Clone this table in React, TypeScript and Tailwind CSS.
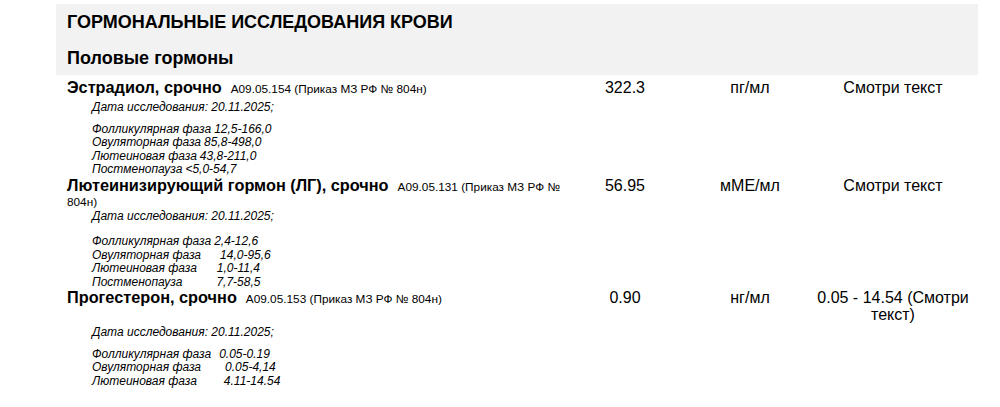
type Range = { label: string; value: string; gap: number };

type Test = {
  name: string;
  code: string;
  value: string;
  unit: string;
  refText: string;
  ranges: Range[];
};

const tests: Test[] = [
  {
    name: "Эстрадиол, срочно",
    code: "A09.05.154 (Приказ МЗ РФ № 804н)",
    value: "322.3",
    unit: "пг/мл",
    refText: "Смотри текст",
    ranges: [
      { label: "Фолликулярная фаза", value: "12,5-166,0", gap: 3 },
      { label: "Овуляторная фаза", value: "85,8-498,0", gap: 3 },
      { label: "Лютеиновая фаза", value: "43,8-211,0", gap: 3 },
      { label: "Постменопауза", value: "<5,0-54,7", gap: 3 },
    ],
  },
  {
    name: "Лютеинизирующий гормон (ЛГ), срочно",
    code: "A09.05.131 (Приказ МЗ РФ № 804н)",
    value: "56.95",
    unit: "мМЕ/мл",
    refText: "Смотри текст",
    ranges: [
      { label: "Фолликулярная фаза", value: "2,4-12,6", gap: 3 },
      { label: "Овуляторная фаза", value: "14,0-95,6", gap: 19 },
      { label: "Лютеиновая фаза", value: "1,0-11,4", gap: 20 },
      { label: "Постменопауза", value: "7,7-58,5", gap: 34 },
    ],
  },
  {
    name: "Прогестерон, срочно",
    code: "A09.05.153 (Приказ МЗ РФ № 804н)",
    value: "0.90",
    unit: "нг/мл",
    refText: "0.05 - 14.54 (Смотри текст)",
    ranges: [
      { label: "Фолликулярная фаза", value: "0.05-0.19", gap: 8 },
      { label: "Овуляторная фаза", value: "0.05-4,14", gap: 24 },
      { label: "Лютеиновая фаза", value: "4.11-14.54", gap: 27 },
    ],
  },
];

// spacing tweaks per row: [row top, date top, ranges top]
const spacing = [
  ["mt-[6px]", "mt-[5px]", "mt-[8px]"],
  ["mt-[2px]", "mt-[1px]", "mt-[12px]"],
  ["mt-[2px]", "mt-[3px]", "mt-[8px]"],
];

function TestBlock({ t, i }: { t: Test; i: number }) {
  const [rowMt, dateMt, rangesMt] = spacing[i];
  return (
    <div>
      <div className={`flex items-start ${rowMt}`}>
        <div className="w-[520px] text-[16.3px] leading-[13px]">
          <span className="font-bold">{t.name}</span>
          <span className="ml-[9px] text-[11.8px]">{t.code}</span>
        </div>
        <div className="w-[76px] text-center text-[16px] leading-[13px]">{t.value}</div>
        <div className="ml-[37px] w-[100px] text-center text-[16px] leading-[13px]">{t.unit}</div>
        <div className="-mt-[2px] ml-[8px] w-[170px] text-center text-[16px] leading-[17px]">{t.refText}</div>
      </div>
      <div className={`pl-[25px] text-[12px] italic leading-[13.5px] ${dateMt}`}>
        Дата исследования: 20.11.2025;
      </div>
      <div className={`pl-[25px] text-[12px] italic leading-[13.5px] ${rangesMt}`}>
        {t.ranges.map((r) => (
          <div key={r.label}>
            {r.label}
            <span style={{ marginLeft: r.gap }}>{r.value}</span>
          </div>
        ))}
      </div>
    </div>
  );
}

export default function App() {
  return (
    <div className="w-[1000px] h-[407px] overflow-hidden bg-white text-black font-['Liberation_Sans',Arial,sans-serif]">
      <div className="ml-[56px] mt-[4px] w-[922px] bg-[#f2f2f2] pl-[11px] pt-[7px] pb-[6px]">
        <h1 className="text-[18px] font-bold leading-[22px]">ГОРМОНАЛЬНЫЕ ИССЛЕДОВАНИЯ КРОВИ</h1>
        <h2 className="mt-[14px] text-[18px] font-bold leading-[22px]">Половые гормоны</h2>
      </div>
      <div className="ml-[67px]">
        {tests.map((t, i) => (
          <TestBlock key={t.name} t={t} i={i} />
        ))}
      </div>
    </div>
  );
}
